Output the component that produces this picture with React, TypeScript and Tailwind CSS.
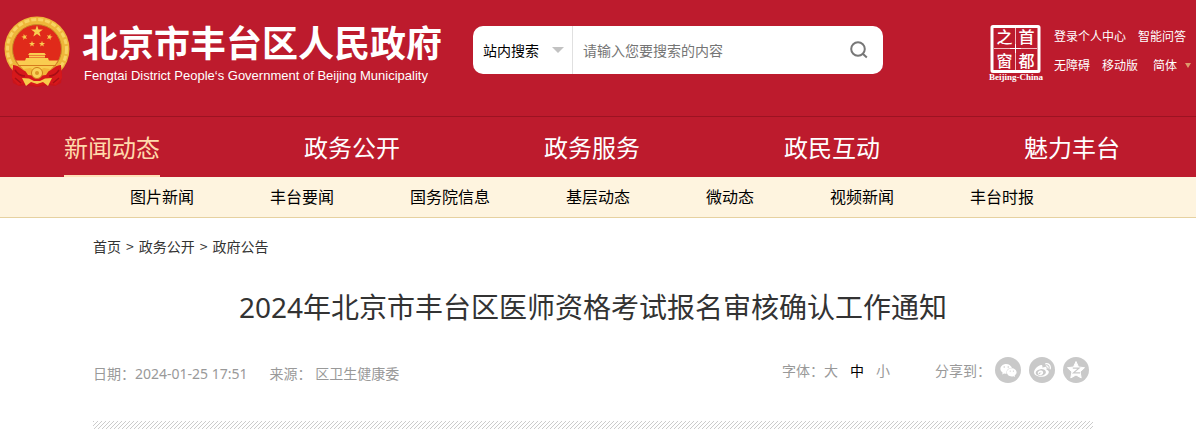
import React from "react";
import { FaWeibo, FaWeixin } from "react-icons/fa";

const topLinks = [
  ["登录个人中心", "智能问答"],
  ["无障碍", "移动版"],
];

const navItems = ["新闻动态", "政务公开", "政务服务", "政民互动", "魅力丰台"];

const subNavItems = ["图片新闻", "丰台要闻", "国务院信息", "基层动态", "微动态", "视频新闻", "丰台时报"];

const crumbs = ["首页", "政务公开", "政府公告"];

const STAR = "M0-10 2.4-3.2 9.5-3.1 3.8 1.2 5.9 8.1 0 4 -5.9 8.1 -3.8 1.2 -9.5-3.1 -2.4-3.2Z";

function Emblem() {
  return (
    <svg viewBox="0 0 66 72" className="h-[72px] w-[66px] shrink-0" aria-hidden="true">
      <path d="M10 48 8 58l1 9 6 3 7-1 11 2 11-2 7 1 6-3 1-9-2-10Z" fill="#c9141a" />
      <circle cx="33" cy="33" r="32.5" fill="#eeb63a" />
      <circle cx="33" cy="33" r="29.500" fill="none" stroke="#f8d363" strokeWidth="3" strokeDasharray="5 2" />
      <circle cx="33" cy="33" r="24.5" fill="#e02a1a" stroke="#c98a26" />
      <g fill="#f9cc50">
        <path d={STAR} transform="translate(33 15.500) scale(.62)" />
        <path d={STAR} transform="translate(20.500 21) rotate(-15) scale(.32)" />
        <path d={STAR} transform="translate(45.500 21) rotate(15) scale(.32)" />
        <path d={STAR} transform="translate(28 28) scale(.32)" />
        <path d={STAR} transform="translate(38 28) scale(.32)" />
        <path d="M25.500 37h15l1.500 2H24ZM25 39.500h16v2H25ZM22 42h22l1 3h-5v2h-5v-2h-4v2h-5v-2h-5Z" />
        <path d="M12 44.500h42L51 49H15ZM16 50h34l-5 5H21Z" />
      </g>
      <path d="M14 49.500h38" stroke="#d67a1d" />
      {/* red drapery over the foot of the wreath */}
      <path d="M9 49c5 0 8 4 12 6s7 1 12 1 8 1 12-1 7-6 12-6l1 13-6 7-7-2-12 3-12-3-7 2-6-7Z" fill="#d6181b" />
      <path d="M11 54c3 5 7 6 10 6M55 54c-3 5-7 6-10 6M11 62l6 5M55 62l-6 5" fill="none" stroke="#a80e15" strokeWidth="1.500" />
      <path d="m20 53 6-1 7 3 7-3 6 1-4 6-9 1-9-1Z" fill="#f1b537" />
      <circle cx="33" cy="57" r="5.500" fill="#f9d25a" stroke="#cf7c19" />
      <circle cx="33" cy="57" r="2" fill="#dc9727" />
      <path d="m18 62 7 .5 5 2.500h6l5-2.500 7-.5-4 8-5-4-6 2-6-2-5 4Z" fill="#f7cb4b" />
    </svg>
  );
}

function CapitalWindow() {
  return (
    <svg viewBox="0 0 56 58" className="h-[58px] w-14" aria-label="首都之窗">
      <rect x="4" y="2.500" width="47" height="45" rx="1" fill="none" stroke="#fff" strokeWidth="3" />
      <path d="M27.500 4v16M27.500 29v17M6 24.500h16M33 24.500h16" stroke="#f3bcc2" strokeWidth="1" />
      <path d="M22 24.500h11M27.500 20v9" stroke="#fff" strokeWidth="1" />
      <g fill="#fff" fontSize="16" fontWeight="500" textAnchor="middle" className="font-['Noto_Sans_CJK_SC',sans-serif]">
        <text x="16.500" y="19">之</text>
        <text x="38.500" y="19">首</text>
        <text x="16.500" y="43">窗</text>
        <text x="38.500" y="43">都</text>
      </g>
      <text x="28" y="56" fill="#fff" fontSize="9" fontWeight="700" textAnchor="middle" className="font-['Liberation_Serif',serif]">
        Beijing-China
      </text>
    </svg>
  );
}

function QzoneIcon() {
  return (
    <svg viewBox="0 0 20 20" className="size-5" aria-hidden="true">
      <path d="m10 1.500 2.500 5.500 6 .7-4.400 4.200 1.100 6L10 15l-5.200 2.900 1.100-6L1.500 7.700l6-.7Z" fill="#fff" stroke="#fff" strokeLinejoin="round" />
      <path d="M6.800 8.200h6.200L7.500 12.800h6.500" fill="none" stroke="#c9c9c9" strokeWidth="1.200" />
    </svg>
  );
}

function Header() {
  return (
    <header className="bg-[#bd1b2d]">
      <div className="flex h-[116px] items-start whitespace-nowrap">
        <a href="#" className="flex shrink-0 pl-1 pt-4 text-white">
          <Emblem />
          <span className="ml-3 flex w-[360px] flex-col">
            <span className="text-[36px] font-bold leading-[50px]">北京市丰台区人民政府</span>
            <span className="pl-0.5 font-['Liberation_Sans',sans-serif] text-[13px] leading-5">
              Fengtai District People‘s Government of Beijing Municipality
            </span>
          </span>
        </a>

        <form className="ml-[31px] mt-[26px] flex h-12 w-[410px] overflow-hidden rounded-[10px] bg-white text-sm">
          <div className="relative w-[100px] shrink-0 border-r border-[#e0e0e0]">
            <select aria-label="搜索范围" className="h-full w-full appearance-none pl-[10px] text-black outline-none">
              <option>站内搜索</option>
            </select>
            <svg viewBox="0 0 12 6" className="pointer-events-none absolute right-2 top-[21px] h-1.5 w-3" aria-hidden="true">
              <path d="M0 0h12L6 6Z" fill="#c2c2c2" />
            </svg>
          </div>
          <input
            type="text"
            aria-label="搜索内容"
            placeholder="请输入您要搜索的内容"
            className="min-w-0 flex-1 pl-[10px] outline-none placeholder:text-[#757575]"
          />
          <button type="button" aria-label="搜索" className="flex w-12 items-center justify-center">
            <svg viewBox="0 0 18 18" className="size-[18px]" fill="none" stroke="#777" strokeWidth="2" aria-hidden="true">
              <circle cx="8" cy="8" r="6.800" />
              <path d="m12.800 12.800 4 3.700" />
            </svg>
          </button>
        </form>

        <div className="ml-auto flex shrink-0 pr-1.5 pt-6">
          <a href="#"><CapitalWindow /></a>
          <div className="ml-[10px] w-[136px] text-xs text-white">
            <div className="flex h-6 items-center gap-3">
              {topLinks[0].map((text) => <a key={text} href="#">{text}</a>)}
            </div>
            <div className="mt-[5px] flex h-6 items-center gap-3">
              {topLinks[1].map((text) => <a key={text} href="#">{text}</a>)}
              <button type="button" className="ml-[3px] flex items-center gap-2">
                简体
                <svg viewBox="0 0 6 5" className="h-[5px] w-1.5" aria-hidden="true">
                  <path d="M0 0h6L3 5Z" fill="#dd9b6c" />
                </svg>
              </button>
            </div>
          </div>
        </div>
      </div>

      <nav className="border-t border-[#9c1322]">
        <ul className="-ml-2 mr-1 grid h-[60px] grid-cols-5 text-2xl text-white">
          {navItems.map((item, i) => (
            <li key={item} className="flex justify-center">
              <a
                href="#"
                className={i === 0 ? "flex items-center border-y-2 border-t-transparent border-b-[#ffe0b8] text-[#ffd9ab]" : "flex items-center"}
              >
                {item}
              </a>
            </li>
          ))}
        </ul>
      </nav>
    </header>
  );
}

export default function App() {
  return (
    <div className="bg-white font-['Noto_Sans_CJK_SC',sans-serif]">
      <Header />
      <nav className="border-b border-[#e6d1a0] bg-[#fef4df]">
        <ul className="flex h-10 items-center gap-[76px] pb-0.5 pl-[130px] text-base text-black">
          {subNavItems.map((item) => (
            <li key={item} className="whitespace-nowrap"><a href="#">{item}</a></li>
          ))}
        </ul>
      </nav>

      <main className="pr-[10px]">
        <div className="mx-auto max-w-[1000px]">
          <div className="flex gap-[5px] pt-[17px] text-sm leading-[22px] text-[#333]">
            {crumbs.map((item, i) => (
              <React.Fragment key={item}>
                {i > 0 && <span>&gt;</span>}
                <a href="#">{item}</a>
              </React.Fragment>
            ))}
          </div>

          <h1 className="mt-[30px] text-center font-['Noto_Sans','Noto_Sans_CJK_SC',sans-serif] text-[28px] leading-10 text-[#333]">
            2024年北京市丰台区医师资格考试报名审核确认工作通知
          </h1>

          <div className="mt-7 flex h-[30px] items-center text-sm text-[#999]">
            <div className="flex pt-2 font-['Noto_Sans','Noto_Sans_CJK_SC',sans-serif]">
              <span>日期：2024-01-25 17:51</span>
              <span className="ml-[22px]">来源： 区卫生健康委</span>
            </div>
            <div className="ml-auto flex items-center">
              <span>字体：</span>
              <div className="flex gap-3">
                <button type="button">大</button>
                <button type="button" className="text-black">中</button>
                <button type="button">小</button>
              </div>
            </div>
            <div className="ml-[45px] flex items-center pr-1">
              <span className="mr-1">分享到：</span>
              <div className="flex gap-2 text-white">
                <a href="#" aria-label="微信" className="flex size-[26px] items-center justify-center rounded-full bg-[#c9c9c9]">
                  <FaWeixin size={17} />
                </a>
                <a href="#" aria-label="微博" className="flex size-[26px] items-center justify-center rounded-full bg-[#c9c9c9]">
                  <FaWeibo size={17} />
                </a>
                <a href="#" aria-label="QQ空间" className="flex size-[26px] items-center justify-center rounded-full bg-[#c9c9c9]">
                  <QzoneIcon />
                </a>
              </div>
            </div>
          </div>

          <div className="mt-9 h-2 bg-[linear-gradient(135deg,#ccc_12.5%,#fff_12.5%,#fff_50%,#ccc_50%,#ccc_62.5%,#fff_62.5%)] bg-size-[4px_4px]" />
        </div>
      </main>
    </div>
  );
}
